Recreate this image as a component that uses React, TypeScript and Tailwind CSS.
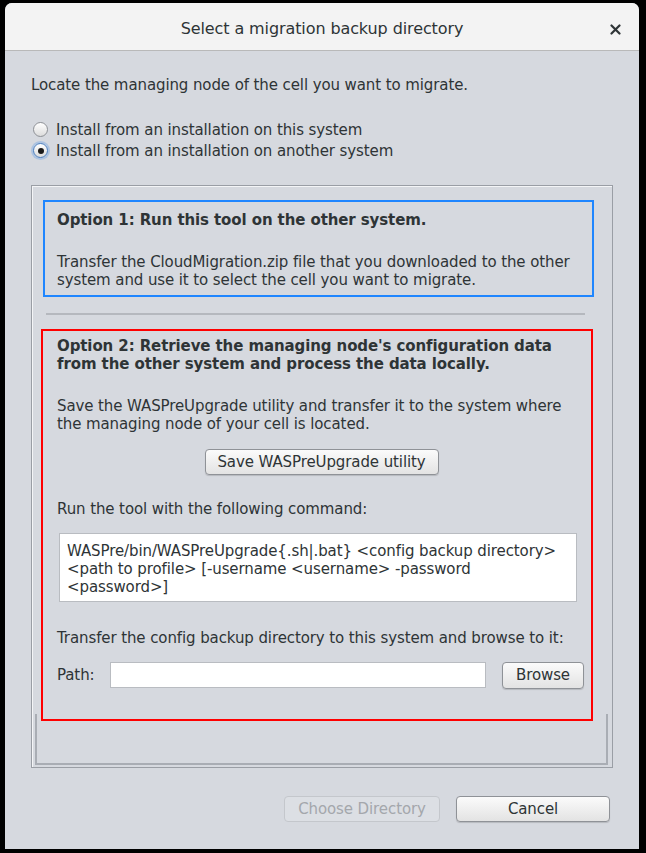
import React from 'react';

const font = { fontFamily: '"DejaVu Sans", "Liberation Sans", sans-serif' };

function Radio({ checked, label }: { checked?: boolean; label: string }) {
  return (
    <div className="flex items-center h-[21px]">
      <span
        className={`w-[15px] h-[15px] rounded-full border flex items-center justify-center bg-gradient-to-b from-[#ffffff] to-[#dcdcdc] ${
          checked ? 'border-[#4a7fc1] ring-2 ring-[#8fb4e3]/60' : 'border-[#8e9196]'
        }`}
      >
        {checked && <span className="w-[6px] h-[6px] rounded-full bg-[#1a1a1a]" />}
      </span>
      <span className="ml-[8px]">{label}</span>
    </div>
  );
}

function Btn({ children, className = '', disabled }: { children: React.ReactNode; className?: string; disabled?: boolean }) {
  return (
    <button
      disabled={disabled}
      className={`h-[26px] shrink-0 rounded-[4px] border text-[15px] tracking-[-0.1px] flex items-center justify-center ${
        disabled
          ? 'border-[#c4c7cc] bg-[#dcdfe4] text-[#a4a7ac]'
          : 'border-[#8f9297] bg-gradient-to-b from-[#fbfbfb] to-[#e3e3e3] text-[#2e3436] shadow-[0_1px_1px_rgba(0,0,0,0.15)]'
      } ${className}`}
    >
      {children}
    </button>
  );
}

export default function App() {
  return (
    <div className="w-[646px] h-[853px] bg-black pt-[3px] pl-[5px]" style={font}>
      <div className="w-[634px] h-[846px] bg-[#d6d9df] rounded-t-[7px] overflow-hidden flex flex-col text-[15px] tracking-[-0.1px] leading-[18px] text-[#2e3436]">
        <div className="h-[48px] bg-[#f3f3f3] border-b border-[#b9b9b9] flex items-center relative shrink-0 pt-[5px]">
          <div className="w-full text-center text-[16px] tracking-[-0.1px] text-[#2e3436]">Select a migration backup directory</div>
          <div className="absolute right-[18px] top-[21px]">
            <svg width="11" height="11" viewBox="0 0 11 11">
              <path d="M1.5 1.5 L9.5 9.5 M9.5 1.5 L1.5 9.5" stroke="#2e3436" strokeWidth="2.2" strokeLinecap="round" />
            </svg>
          </div>
        </div>

        <div className="pl-[26px] flex flex-col">
          <p className="mt-[25px]">Locate the managing node of the cell you want to migrate.</p>

          <div className="mt-[25px] pl-[2px] flex flex-col">
            <Radio label="Install from an installation on this system" />
            <Radio checked label="Install from an installation on another system" />
          </div>

          <div className="mt-[24px] w-[582px] h-[583px] border border-[#9a9ea5] shadow-[inset_1px_1px_0_#f4f5f7] flex flex-col">
            <div className="mt-[14px] ml-[11px] w-[551px] border-2 border-[#1f86ff] pl-[12px] pt-[9px] pb-[6px]">
              <p className="font-bold">Option 1: Run this tool on the other system.</p>
              <p className="mt-[24px]">
                Transfer the CloudMigration.zip file that you downloaded to the other system and use it to select the cell you want to migrate.
              </p>
            </div>

            <div className="mt-[16px] ml-[14px] w-[539px] h-[2px] bg-[#b5b8be]" />

            <div className="mt-[14px] ml-[9px] w-[552px] border-2 border-[#ff0000] pl-[14px] pr-[14px] pt-[6px] pb-[30px] relative z-10">
              <p className="font-bold">
                Option 2: Retrieve the managing node's configuration data from the other system and process the data locally.
              </p>
              <p className="mt-[24px]">
                Save the WASPreUpgrade utility and transfer it to the system where the managing node of your cell is located.
              </p>
              <div className="mt-[16px] flex justify-center pl-[9px]">
                <Btn className="w-[234px]">Save WASPreUpgrade utility</Btn>
              </div>
              <p className="mt-[25px]">Run the tool with the following command:</p>
              <div className="mt-[15px] ml-[2px] w-[518px] h-[69px] bg-white border border-[#b9bcc1] pl-[7px] pt-[8px] whitespace-nowrap">
                WASPre/bin/WASPreUpgrade{'{'}.sh|.bat{'}'} &lt;config backup directory&gt;
                <br />
                &lt;path to profile&gt; [-username &lt;username&gt; -password
                <br />
                &lt;password&gt;]
              </div>
              <p className="mt-[27px]">Transfer the config backup directory to this system and browse to it:</p>
              <div className="mt-[14px] flex items-center h-[28px]">
                <span className="w-[53px] shrink-0">Path:</span>
                <div className="w-[376px] h-[26px] shrink-0 bg-white border border-[#b9bcc1]" />
                <Btn className="ml-[16px] w-[82px] h-[27px]">Browse</Btn>
              </div>
            </div>

            <div className="-mt-[7px] ml-[3px] w-[573px] h-[51px] border-l-2 border-r-2 border-b-2 border-[#a9adb4]" />
          </div>

          <div className="mt-[28px] flex justify-end gap-[16px] pr-[29px]">
            <Btn disabled className="w-[156px]">Choose Directory</Btn>
            <Btn className="w-[154px]">Cancel</Btn>
          </div>
        </div>
      </div>
    </div>
  );
}
